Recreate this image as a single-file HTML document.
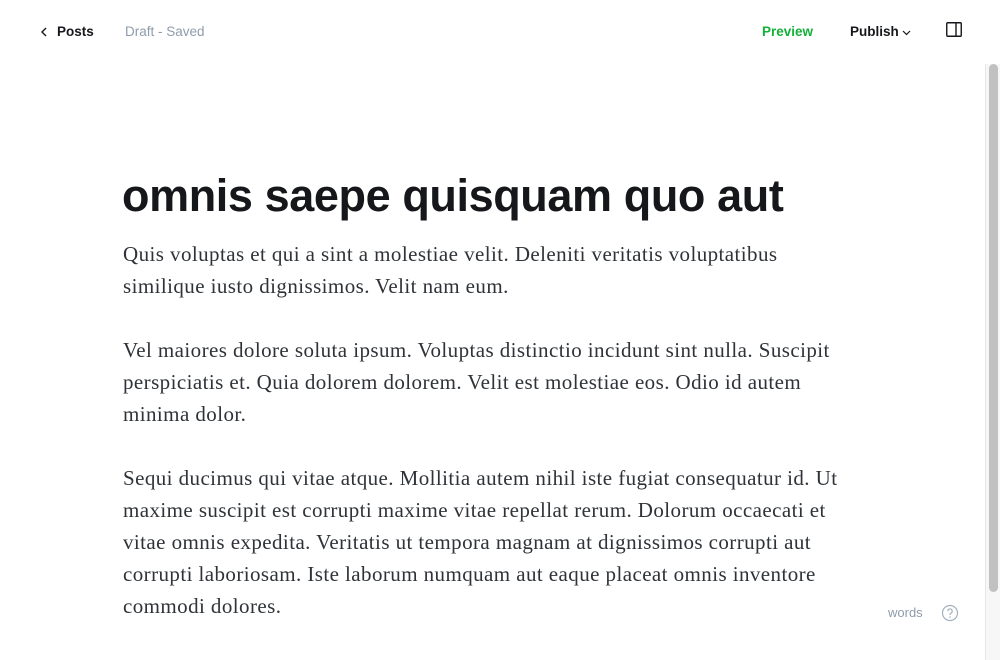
<!DOCTYPE html>
<html><head><meta charset="utf-8"><style>
*{margin:0;padding:0;box-sizing:border-box}
body{width:1000px;height:660px;overflow:hidden;background:#fff;position:relative;font-family:"Liberation Sans",sans-serif}
.nav{position:absolute;top:0;left:0;width:1000px;height:64px}
.t{position:absolute;top:24px;font-size:13.5px;line-height:16px}
.sb{position:absolute;left:985px;top:64px;width:15px;height:596px;background:#f7f7f7;border-left:1px solid #e6e6e6}
.th{position:absolute;left:3px;top:0;width:9px;height:528px;background:#c1c1c1;border-radius:5px}
h1{position:absolute;left:122px;top:166px;font-size:45px;font-weight:bold;letter-spacing:-0.4px;color:#15171a;white-space:nowrap;line-height:60px}
.c{position:absolute;left:123px;font-family:"Liberation Serif",serif;font-size:21px;letter-spacing:0.42px;line-height:32px;color:#2f3338;white-space:nowrap}
</style></head><body>
<div class="nav">
<svg style="position:absolute;left:40px;top:27px" width="8" height="10" viewBox="0 0 8 10"><path d="M6 1L2 5l4 4" fill="none" stroke="#15171a" stroke-width="1.4"/></svg>
<div class="t" style="left:57px;color:#15171a;font-weight:bold">Posts</div>
<div class="t" style="left:125px;color:#8e9cac">Draft - Saved</div>
<div class="t" style="left:762px;font-weight:bold;color:#14b139">Preview</div>
<div class="t" style="left:850px;color:#15171a;font-weight:bold">Publish</div>
<svg style="position:absolute;left:902px;top:29px" width="9" height="7" viewBox="0 0 9 7"><path d="M1 2l3.5 3.5L8 2" fill="none" stroke="#15171a" stroke-width="1.2"/></svg>
<svg style="position:absolute;left:946px;top:22px" width="16" height="15" viewBox="0 0 16 15"><rect x="0.75" y="0.75" width="14.5" height="13.5" rx="1" fill="none" stroke="#15171a" stroke-width="1.4"/><path d="M10 1v13" stroke="#15171a" stroke-width="1.4"/></svg>
</div>
<h1>omnis saepe quisquam quo aut</h1>
<div class="c" style="top:238px">Quis voluptas et qui a sint a molestiae velit. Deleniti veritatis voluptatibus<br>similique iusto dignissimos. Velit nam eum.</div>
<div class="c" style="top:334px">Vel maiores dolore soluta ipsum. Voluptas distinctio incidunt sint nulla. Suscipit<br>perspiciatis et. Quia dolorem dolorem. Velit est molestiae eos. Odio id autem<br>minima dolor.</div>
<div class="c" style="top:462px">Sequi ducimus qui vitae atque. Mollitia autem nihil iste fugiat consequatur id. Ut<br>maxime suscipit est corrupti maxime vitae repellat rerum. Dolorum occaecati et<br>vitae omnis expedita. Veritatis ut tempora magnam at dignissimos corrupti aut<br>corrupti laboriosam. Iste laborum numquam aut eaque placeat omnis inventore<br>commodi dolores.</div>
<div style="position:absolute;left:888px;top:605px;font-size:13px;color:#8e9cac">words</div>
<svg style="position:absolute;left:941px;top:604px" width="18" height="18" viewBox="0 0 18 18"><circle cx="9" cy="9" r="7.5" fill="none" stroke="#a5b0bd" stroke-width="1.2"/><path d="M6.8 7.2a2.2 2.2 0 1 1 3 2c-.6.3-.8.7-.8 1.3v.5" fill="none" stroke="#a5b0bd" stroke-width="1.2"/><circle cx="9" cy="13" r=".8" fill="#a5b0bd"/></svg>
<div class="sb"><div class="th"></div></div>
</body></html>
